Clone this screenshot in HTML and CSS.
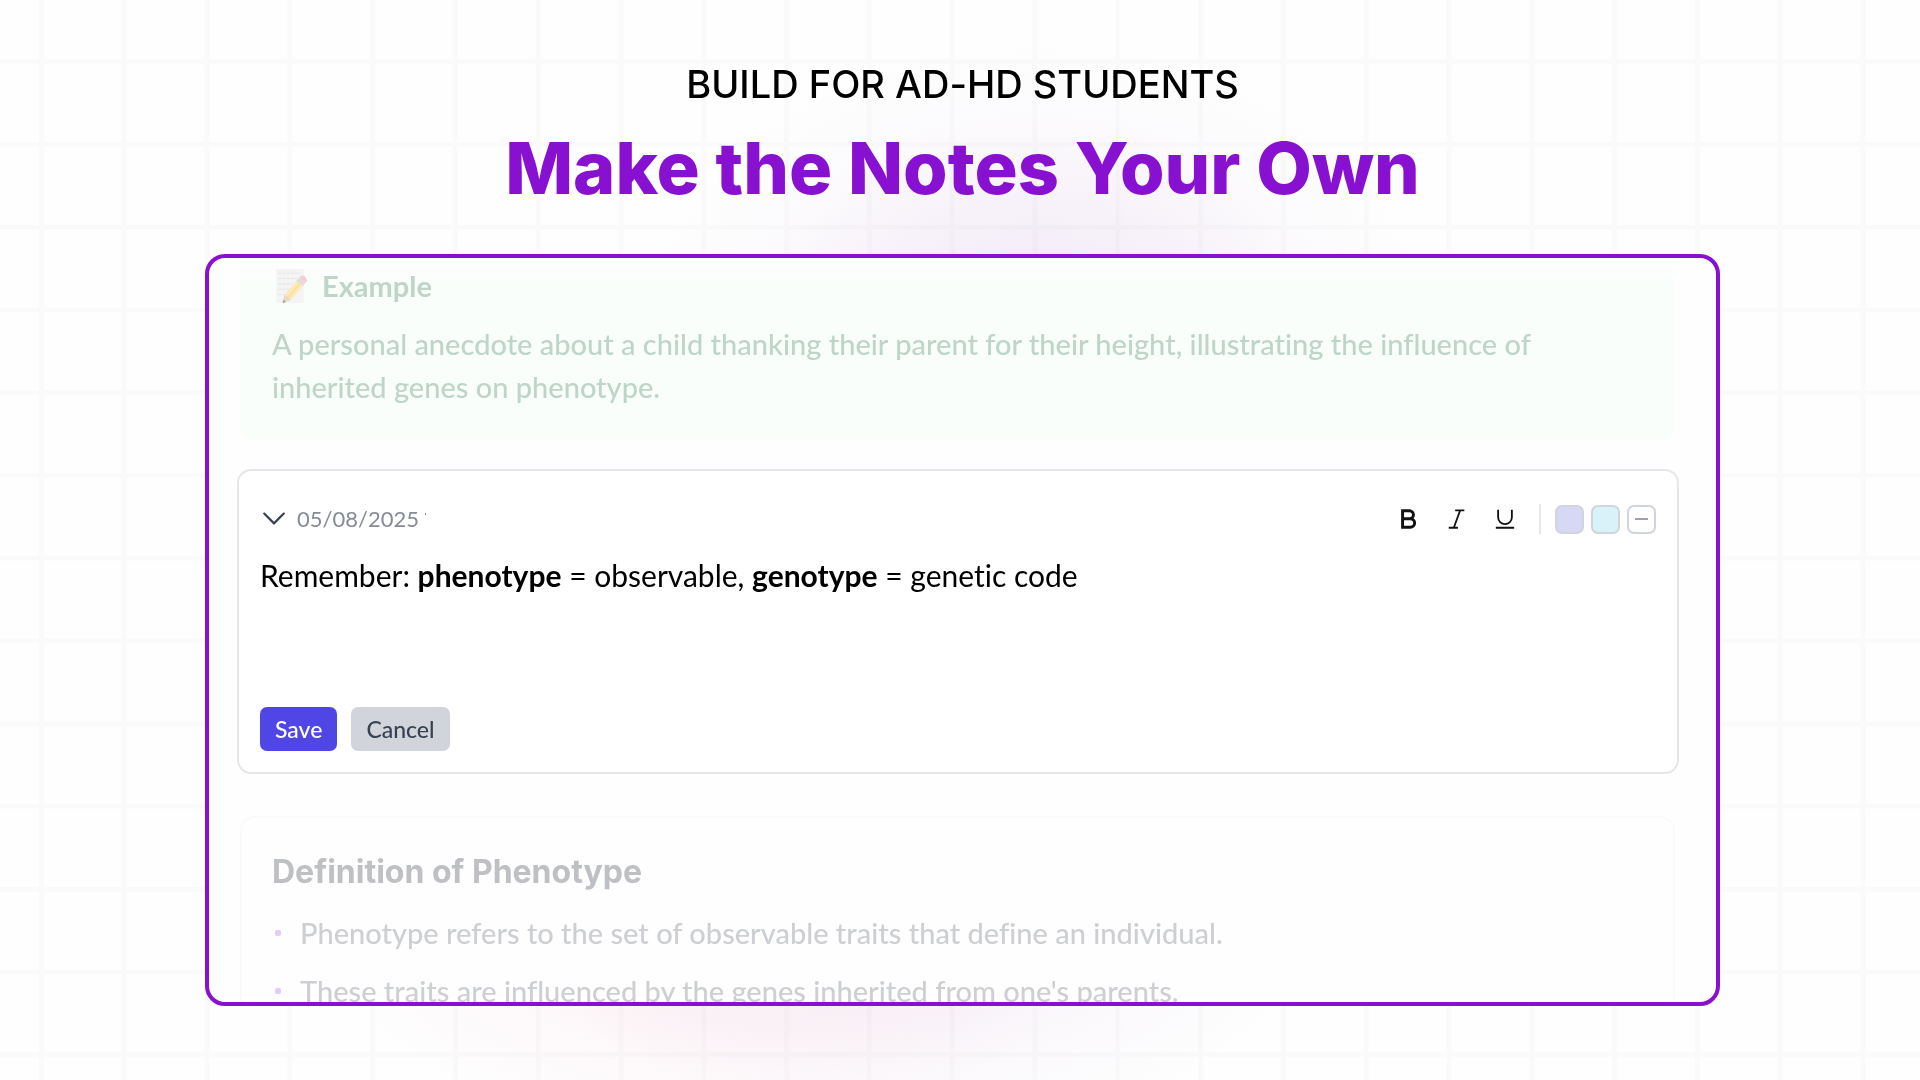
FILE: index.html
```html
<!DOCTYPE html>
<html lang="en">
<head>
    <meta charset="UTF-8">
    <meta name="viewport" content="width=device-width, initial-scale=1.0">
    <title>Make the Notes Your Own</title>
    <link rel="stylesheet" href="styles.css">
</head>
<body>

    <!-- Background grid -->
    <svg class="grid" aria-hidden="true">
        <defs>
            <pattern id="cell" x="39" y="59.4" width="82.8" height="82.75" patternUnits="userSpaceOnUse">
                <path d="M2.4 0v82.75M0 2.3h82.8" stroke="#000" stroke-opacity="0.017" stroke-width="4.6" fill="none"/>
            </pattern>
        </defs>
        <rect width="100%" height="100%" fill="url(#cell)"/>
    </svg>

    <main class="page">
        <header class="intro">
            <p class="kicker">BUILD FOR AD-HD STUDENTS</p>
            <h1>Make the Notes Your Own</h1>
        </header>

        <div class="panel">
            <section class="example">
                <h2>
                    <svg class="memo" viewBox="0 0 32 34" aria-hidden="true">
                        <rect x="3" y="1" width="26" height="32" fill="#f4f4f4"/>
                        <path d="M5 5h21M5 10h18M5 15h14M5 20h10M5 25h7" stroke="#e4e4e4" stroke-width="1" stroke-dasharray="3 1"/>
                        <path d="M11 25l12-14 6 5-12 14z" fill="#fdeab8"/>
                        <path d="M14 28l12-14" stroke="#f9dfa2" stroke-width="2"/>
                        <path d="M22 12l3-3 6 5-3 3z" fill="#dedede"/>
                        <path d="M25 9q2-3 5-1q3 3 1 6z" fill="#fbcaca"/>
                        <path d="M11 25l6 5-8 3z" fill="#ead9c0"/>
                        <path d="M9 33l1-3 2 2z" fill="#999"/>
                    </svg>
                    Example
                </h2>
                <p>A personal anecdote about a child thanking their parent for their height, illustrating the influence of inherited genes on phenotype.</p>
            </section>

            <section class="note">
                <div class="note-head">
                    <button class="toggle" aria-label="Collapse note">
                        <svg viewBox="0 0 22 22"><path d="M2 6l9 9 9-9"/></svg>
                    </button>
                    <time datetime="2025-05-08">05/08/2025</time>
                    <span class="tick"></span>
                    <div class="tools">
                        <button class="tool" aria-label="Bold">
                            <svg viewBox="0 0 24 24"><path d="M5 3h7.500a4.300 4.300 0 0 1 0 8.700H5zM5 11.700h8.500a4.600 4.600 0 0 1 0 9.300H5z" stroke-width="3.200"/></svg>
                        </button>
                        <button class="tool" aria-label="Italic">
                            <svg viewBox="0 0 24 24"><path d="M10 2.500h10M3 21.500h10M15.500 2.500l-7 19" stroke-width="2"/></svg>
                        </button>
                        <button class="tool" aria-label="Underline">
                            <svg viewBox="0 0 24 24"><path d="M4.500 2v8a7.500 7.500 0 0 0 15 0V2M2 21.500h20" stroke-width="2"/></svg>
                        </button>
                        <span class="divider"></span>
                        <button class="swatch lilac" aria-label="Lilac highlight"></button>
                        <button class="swatch sky" aria-label="Blue highlight"></button>
                        <button class="swatch none" aria-label="No highlight"></button>
                    </div>
                </div>
                <div class="note-text" contenteditable="true" role="textbox" aria-label="Note">Remember: <b>phenotype</b> = observable, <b>genotype</b> = genetic code</div>
                <div class="actions">
                    <button class="save">Save</button>
                    <button class="cancel">Cancel</button>
                </div>
            </section>

            <section class="definition">
                <h2>Definition of Phenotype</h2>
                <ul>
                    <li>Phenotype refers to the set of observable traits that define an individual.</li>
                    <li>These traits are influenced by the genes inherited from one's parents.</li>
                </ul>
            </section>
        </div>
    </main>

</body>
</html>
```
FILE: styles.css
```css
* {
    box-sizing: border-box;
}

body {
    margin: 0;
    font-family: Lato, "Liberation Sans", sans-serif;
    font-variant-ligatures: none;
    color: #000;
    /* Soft purple and pink glows behind the panel */
    background:
        radial-gradient(ellipse 400px 300px at 54% 340px, rgba(140, 60, 180, 0.12), rgba(140, 60, 180, 0.07) 40%, rgba(140, 60, 180, 0.015) 75%, transparent),
        radial-gradient(ellipse 400px 240px at 37% 900px, rgba(230, 90, 130, 0.10), rgba(230, 90, 130, 0.05) 50%, transparent),
        radial-gradient(ellipse 400px 240px at 48% 900px, rgba(140, 60, 180, 0.08), rgba(140, 60, 180, 0.04) 50%, transparent),
        #fefefe;
}

h1,
h2,
p,
ul {
    margin: 0;
    padding: 0;
}

button {
    font-family: inherit;
    border: 0;
    padding: 0;
    background: none;
    cursor: pointer;
}

.grid {
    position: fixed;
    top: 0;
    left: 0;
    width: 100%;
    height: 100%;
    z-index: -1;
}

.page {
    display: flex;
    flex-direction: column;
    height: 100vh;
    padding: 60px 200px 74px 205px;
}

/* Heading */
.intro {
    height: 194px;
    flex-shrink: 0;
    text-align: center;
    font-family: Inter, "Liberation Sans", sans-serif;
}

.kicker {
    font-size: 38px;
    line-height: 48px;
    font-weight: 450;
}

h1 {
    margin-top: 16px;
    font-size: 72px;
    line-height: 88px;
    font-weight: 800;
    color: #8810d0;
}

/* Panel, its content runs on past the lower edge */
.panel {
    flex: 1;
    min-height: 0;
    overflow: hidden;
    padding: 0 37px 0 28px;
    border: 4px solid #8810d0;
    border-radius: 20px;
    background: #fefefe;
}

.example {
    margin: 0 4px 0 3px;
    padding: 8px 32px 32px;
    border-radius: 0 0 14px 14px;
    background: linear-gradient(#fefefe, #f9fefb 30px);
    color: #bfd5c9;
}

.example h2 {
    display: flex;
    align-items: center;
    gap: 14px;
    font-size: 29px;
    line-height: 40px;
}

.memo {
    width: 36px;
    height: 36px;
}

.example p {
    margin-top: 16px;
    font-size: 29px;
    line-height: 43px;
    font-weight: 500;
}

/* Note editor */
.note {
    margin-top: 29px;
    padding: 32px 21px 21px;
    border: 2px solid #e5e7eb;
    border-radius: 14px;
    background: #fff;
}

.note-head {
    display: flex;
    align-items: center;
    height: 32px;
}

.toggle {
    display: flex;
    margin: 0 11px 0 2px;
}

.toggle svg {
    width: 24px;
    height: 24px;
    fill: none;
    stroke: #374151;
    stroke-width: 2;
    stroke-linecap: round;
    stroke-linejoin: round;
}

time {
    font-size: 22px;
    line-height: 32px;
    color: #858b97;
}

.tick {
    width: 1px;
    height: 2px;
    margin: 0 0 10px 6px;
    background: #858b97;
}

.tools {
    display: flex;
    align-items: center;
    gap: 7px;
    margin-left: auto;
}

.tool {
    display: flex;
    justify-content: center;
    width: 41px;
}

.tool svg {
    width: 22px;
    height: 22px;
    fill: none;
    stroke: #111;
}

.divider {
    width: 2px;
    height: 30px;
    margin: 0 7px;
    background: #e5e7eb;
}

.swatch {
    display: flex;
    align-items: center;
    justify-content: center;
    width: 29px;
    height: 29px;
    border: 2px solid #d1d5db;
    border-radius: 7px;
}

.lilac {
    background: #d7d7f6;
}

.sky {
    background: #d9f2f9;
}

.none::before {
    content: "";
    width: 13px;
    height: 2px;
    background: #9ca3af;
}

.note-text {
    min-height: 152px;
    margin-top: 20px;
    font-size: 30px;
    line-height: 40px;
    outline: none;
}

.actions {
    display: flex;
    gap: 14px;
}

.actions button {
    height: 44px;
    padding: 0 15px;
    border-radius: 7px;
    font-size: 23px;
    font-weight: 500;
}

.actions .save {
    background: #4f46e5;
    color: #fff;
}

.actions .cancel {
    background: #d1d5db;
    color: #374151;
}

/* Faded card below the note */
.definition {
    margin: 42px 4px 0 3px;
    padding: 32px 30px;
    border: 2px solid #fafafa;
    border-radius: 14px;
}

.definition h2 {
    font-family: Inter, "Liberation Sans", sans-serif;
    font-size: 32px;
    line-height: 44px;
    color: #bfc0c4;
}

.definition ul {
    margin-top: 17px;
    list-style: none;
}

.definition li {
    display: flex;
    align-items: center;
    gap: 19px;
    margin-bottom: 14px;
    font-size: 29px;
    line-height: 44px;
    font-weight: 500;
    color: #cdcfd3;
}

.definition li::before {
    content: "";
    width: 6px;
    height: 6px;
    margin-left: 3px;
    border-radius: 2px;
    background: #e3ccfb;
}
```
